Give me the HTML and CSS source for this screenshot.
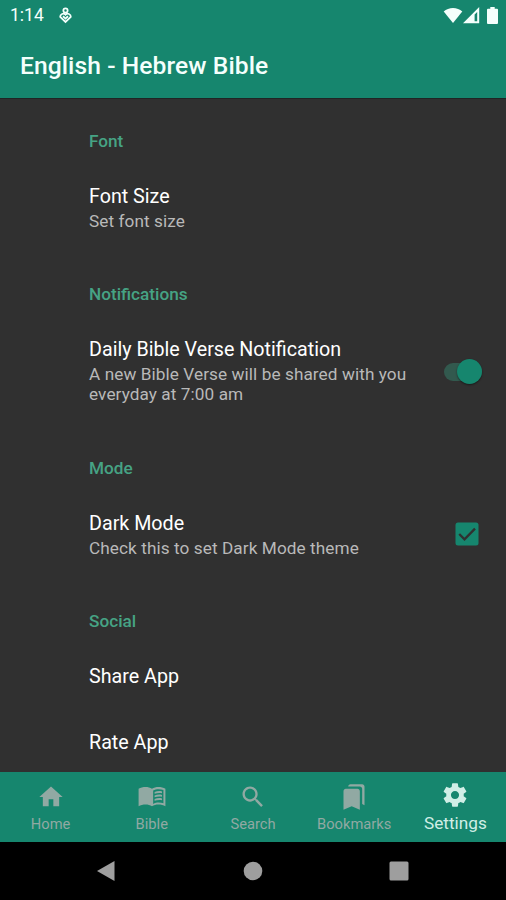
FILE: index.html
```html
<!DOCTYPE html>
<html lang="en">
<head>
<meta charset="utf-8">
<title>English - Hebrew Bible</title>
<link rel="stylesheet" href="styles.css">
</head>
<body>
<div class="screen">
  <header class="top">
    <div class="status">
      <span class="clock">1:14</span>
      <svg class="notice" width="13" height="17" viewBox="0 0 14 18" fill="none" stroke="currentColor" stroke-width="1.9"><circle cx="7" cy="3.600" r="2.300"/><path d="M7 8.200C4.800 5.800 1.200 7.600 1.300 10.400L7 16l5.700-5.600C12.800 7.600 9.200 5.800 7 8.200z"/><path d="M4.300 9.800L7 12.300l2.700-2.500"/></svg>
      <div class="signals">
        <svg width="20" height="17" viewBox="0 0 20 17" fill="currentColor"><path d="M10 16L.7 4.500C5.500-.3 14.500-.3 19.300 4.500z"/></svg>
        <svg width="17" height="17" viewBox="0 0 17 17" fill="currentColor"><path fill-rule="evenodd" d="M0 16.200L16.200 0v16.200zM11.600 7.600v6.600h2.600V5z"/></svg>
        <svg class="battery" width="11" height="17" viewBox="0 0 11 17" fill="currentColor"><path d="M3.300 0h4.400v1.700H10q1 0 1 1V16q0 1-1 1H1q-1 0-1-1V2.700q0-1 1-1h2.300z"/></svg>
      </div>
    </div>
    <h1 class="title">English - Hebrew Bible</h1>
  </header>

  <main class="settings">
    <h2 class="category">Font</h2>
    <div class="item"><div class="text"><div class="name">Font Size</div><div class="summary">Set font size</div></div></div>

    <h2 class="category">Notifications</h2>
    <div class="item">
      <div class="text"><div class="name">Daily Bible Verse Notification</div><div class="summary">A new Bible Verse will be shared with you<br>everyday at 7:00 am</div></div>
      <div class="switch"><span class="thumb"></span></div>
    </div>

    <h2 class="category">Mode</h2>
    <div class="item">
      <div class="text"><div class="name">Dark Mode</div><div class="summary">Check this to set Dark Mode theme</div></div>
      <svg class="check" width="24" height="24" viewBox="0 0 24 24"><rect x=".5" y=".5" width="23" height="23" rx="2.500" fill="#16866e"/><path d="M4.200 12l5.300 5.300L20 6.600" fill="none" stroke="#303030" stroke-width="2.300"/></svg>
    </div>

    <h2 class="category">Social</h2>
    <div class="item"><div class="text"><div class="name">Share App</div></div></div>
    <div class="item"><div class="text"><div class="name">Rate App</div></div></div>
  </main>

  <nav class="tabs">
    <div class="tab"><svg viewBox="0 0 24 24"><path d="M10 20v-6h4v6h5v-8h3L12 3 2 12h3v8z"/></svg><span>Home</span></div>
    <div class="tab"><svg viewBox="0 0 24 24"><path fill-rule="evenodd" d="M12 5C10.500 4 8.500 3.500 6.500 3.500S2 4 .5 5v15c1.500-1 4-1.500 6-1.500s4 .5 5.500 1.500c1.500-1 3.500-1.500 5.500-1.500s4.500.5 6 1.500V5c-1.500-1-4-1.500-6-1.500S13.500 4 12 5zM13 6.500c1.500-.8 3-1.200 4.700-1.200 1.500 0 2.800.2 4.100.6v11.500c-1.300-.4-2.600-.6-4.100-.6-1.700 0-3.200.4-4.700 1.200z"/><path d="M14.200 7.700c2-.8 4.200-1 6.400-.5v1.500c-2.200-.4-4.400-.2-6.400.6zM14.200 10.700c2-.8 4.200-1 6.400-.5v1.500c-2.200-.4-4.400-.2-6.400.6zM14.200 13.700c2-.8 4.200-1 6.400-.5v1.500c-2.200-.4-4.400-.2-6.400.6z"/></svg><span>Bible</span></div>
    <div class="tab"><svg viewBox="0 0 24 24"><path d="M15.500 14h-.79l-.28-.27C15.410 12.590 16 11.110 16 9.500 16 5.910 13.090 3 9.500 3S3 5.910 3 9.500 5.910 16 9.500 16c1.610 0 3.090-.59 4.230-1.570l.27.28v.79l5 4.990L20.490 19l-4.990-5zm-6 0C7.010 14 5 11.990 5 9.500S7.010 5 9.500 5 14 7.010 14 9.500 11.990 14 9.500 14z"/></svg><span>Search</span></div>
    <div class="tab"><svg viewBox="0 0 24 24"><path d="M19 18l2 1V3c0-1.100-.9-2-2-2H8.990C7.890 1 7 1.900 7 3h10c1.100 0 2 .9 2 2v13zM15 5H5c-1.100 0-2 .9-2 2v16l7-3 7 3V7c0-1.100-.9-2-2-2z"/></svg><span>Bookmarks</span></div>
    <div class="tab active"><svg viewBox="0 0 24 24"><path d="M19.430 12.980c.04-.32.07-.64.07-.98s-.03-.66-.07-.98l2.110-1.650c.19-.15.24-.42.12-.64l-2-3.460c-.12-.22-.39-.3-.61-.22l-2.490 1c-.52-.4-1.080-.73-1.690-.98l-.38-2.650C14.460 2.180 14.250 2 14 2h-4c-.25 0-.46.18-.49.42l-.38 2.650c-.61.25-1.170.59-1.690.98l-2.490-1c-.23-.09-.49 0-.61.22l-2 3.460c-.13.22-.07.49.12.64l2.110 1.650c-.04.32-.07.65-.07.98s.03.66.07.98l-2.110 1.650c-.19.15-.24.42-.12.64l2 3.460c.12.22.39.3.61.22l2.490-1c.52.4 1.080.73 1.690.98l.38 2.650c.03.24.24.42.49.42h4c.25 0 .46-.18.49-.42l.38-2.650c.61-.25 1.170-.59 1.690-.98l2.490 1c.23.09.49 0 .61-.22l2-3.460c.12-.22.07-.49-.12-.64l-2.110-1.650zM12 15.500c-1.930 0-3.500-1.570-3.500-3.500s1.570-3.500 3.500-3.500 3.500 1.570 3.500 3.500-1.570 3.500-3.500 3.500z"/></svg><span>Settings</span></div>
  </nav>

  <footer class="system">
    <svg width="20" height="22" viewBox="0 0 20 22"><path d="M1 11L18.500 1v20z"/></svg>
    <svg width="20" height="22" viewBox="0 0 20 22"><circle cx="10" cy="11" r="9.300"/></svg>
    <svg width="20" height="22" viewBox="0 0 20 22"><rect x=".5" y="1.500" width="19" height="19" rx="1.500"/></svg>
  </footer>
</div>
</body>
</html>
```

FILE: styles.css
```css
* { box-sizing: border-box; }
body { margin: 0; background: #303030; font-family: Roboto, "Liberation Sans", sans-serif; }
.screen { width: 506px; height: 900px; display: flex; flex-direction: column; overflow: hidden; background: #303030; }
.top { height: 99px; flex: none; background: #16866e; border-bottom: 1px solid #202525; color: #f4fffc; }
.status { height: 31px; display: flex; align-items: center; padding: 0 8px 0 10px; }
.clock { font-size: 17.5px; line-height: 31px; }
.notice { margin-left: 15px; }
.signals { margin-left: auto; display: flex; align-items: center; }
.battery { margin-left: 7px; }
.title { margin: 0; padding-left: 20px; font-size: 24.6px; font-weight: 500; line-height: 69px; letter-spacing: .08px; white-space: nowrap; }
.settings { flex: 1; min-height: 0; overflow: hidden; padding-left: 89px; }
.category { margin: 0; height: 64px; padding-top: 32px; font-size: 17.2px; line-height: 20px; font-weight: 500; color: #46a384; }
.item { display: flex; align-items: center; padding: 22px 0 20px; }
.text { flex: 1; white-space: nowrap; }
.name { font-size: 19.7px; line-height: 24px; color: #fff; }
.summary { margin-top: 2px; padding-bottom: 1px; font-size: 17.2px; line-height: 20.200px; letter-spacing: .08px; color: #b9b9b9; }
.switch { width: 38px; height: 18px; margin-right: 24px; border-radius: 9px; background: #32594e; display: flex; align-items: center; justify-content: flex-end; }
.thumb { width: 25px; height: 25px; flex: none; border-radius: 50%; background: #16866e; box-shadow: 0 1px 2px #0007; }
.check { margin: 0 27px 3px 0; }
.tabs { height: 70px; flex: none; display: grid; grid-template-columns: repeat(5, 1fr); background: #16866e; color: #91a9a3; }
.tab { display: flex; flex-direction: column; align-items: center; padding-top: 11px; font-size: 14.7px; line-height: 18px; }
.tab svg { width: 28px; height: 28px; fill: currentColor; margin-bottom: 4px; }
.active { padding-top: 9px; font-size: 17.2px; color: #d0eee6; }
.active svg { margin-bottom: 5px; }
.system { height: 58px; flex: none; display: flex; justify-content: space-between; align-items: center; padding: 0 97px 0 96px; background: #000; }
.system svg { fill: #9e9e9e; }
```
